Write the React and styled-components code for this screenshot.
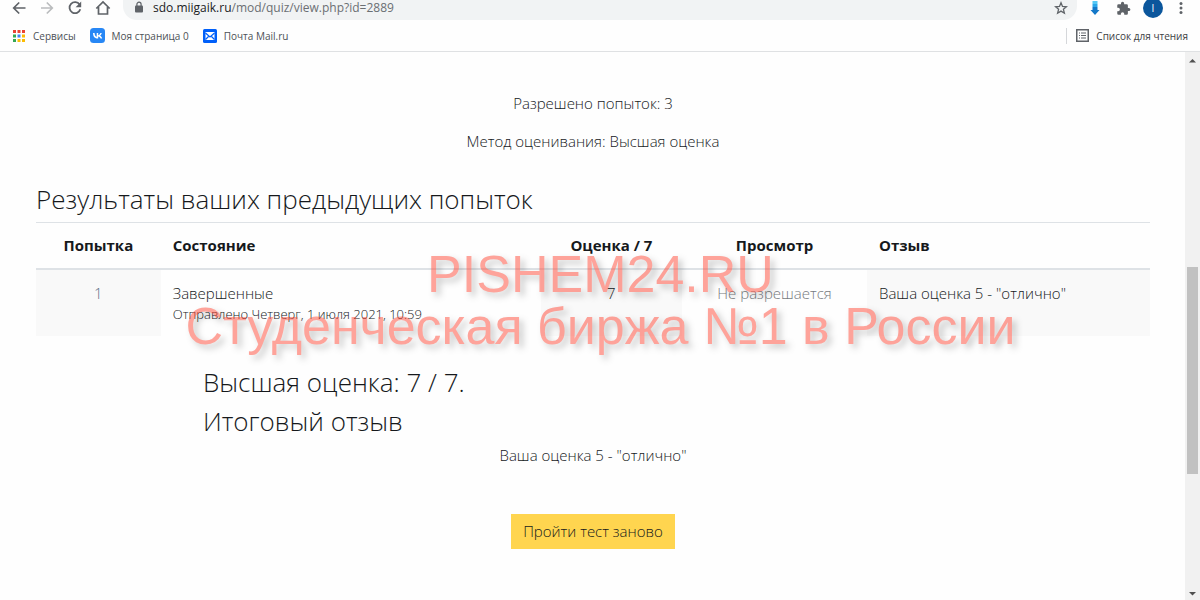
import React from 'react';
import styled, { createGlobalStyle } from 'styled-components';

const GlobalStyle = createGlobalStyle`
  * {
    box-sizing: border-box;
  }
  body {
    margin: 0;
    background-color: #fefefe;
    color: #16191c;
    font-family: 'Open Sans', 'Noto Sans', sans-serif;
    font-size: 15px;
    font-weight: 300;
    line-height: 22px;
  }
`;

const Screen = styled.div`
  min-height: 100vh;
  display: flex;
  flex-direction: column;
`;

const Toolbar = styled.header`
  height: 20px;
  display: flex;
  align-items: flex-start;
  padding: 0 11px;
  overflow: hidden;
`;

const IconButton = styled.button`
  width: 16px;
  height: 16px;
  padding: 0;
  margin-right: 12px;
  flex: none;
  display: flex;
  justify-content: center;
  align-items: center;
  color: ${(props) => (props.$muted ? '#babcbe' : '#5f6368')};
  background-color: transparent;
  border: none;
`;

const AddressBar = styled.div`
  flex: 1;
  height: 20px;
  display: flex;
  padding: 0 8px 4px 11px;
  margin-right: 10px;
  background-color: #f1f3f4;
  border-radius: 0 0 14px 14px;
  color: #6b6f73;
  font-size: 12px;
  font-weight: 400;
  line-height: 16px;

  svg {
    flex: none;
  }
`;

const Url = styled.span`
  flex: 1;
  margin-left: 9px;

  b {
    color: #202124;
    font-weight: 400;
  }
`;

const StarButton = styled(IconButton)`
  margin: 0;
`;

const Avatar = styled.button`
  width: 20px;
  height: 20px;
  padding: 0;
  margin-top: -2px;
  margin-right: 10px;
  flex: none;
  color: white;
  background-color: #0b569c;
  border: none;
  border-radius: 50%;
  font-family: inherit;
  font-size: 10px;
  line-height: 20px;
`;

const Bookmarks = styled.nav`
  height: 32px;
  display: flex;
  align-items: center;
  padding: 0 12px;
  border-bottom: 1px solid #dfe1e3;
`;

const Bookmark = styled.a`
  display: flex;
  align-items: center;
  gap: 7px;
  margin-right: 14px;
  color: #4d5156;
  font-size: 10px;
  font-weight: 400;
  line-height: 16px;
  text-decoration: none;
  white-space: nowrap;
`;

const ReadingList = styled.button`
  display: flex;
  align-items: center;
  gap: 7px;
  margin-left: auto;
  padding: 0 0 0 9px;
  color: #3c4043;
  background-color: transparent;
  border: none;
  border-left: 1px solid #d5d7da;
  font-family: inherit;
  font-size: 10px;
  line-height: 16px;
  white-space: nowrap;
`;

const Viewport = styled.div`
  flex: 1;
  display: flex;
`;

const Main = styled.main`
  flex: 1;
  position: relative;
  padding: 40px 35px 32px 36px;
`;

const Info = styled.p`
  margin: 0 0 16px;
  text-align: center;
`;

const Title = styled.h3`
  margin: 0;
  font-size: 26px;
  font-weight: 300;
  line-height: 31px;
`;

const ResultsTitle = styled(Title)`
  margin-top: 32px;
  margin-bottom: 7px;
`;

const Table = styled.table`
  width: 100%;
  table-layout: fixed;
  border-collapse: collapse;
`;

const HeadCell = styled.th`
  width: ${(props) => props.$width};
  padding: 11px 12px 12px;
  text-align: ${(props) => props.$align || 'left'};
  font-weight: 700;
  border-top: 1px solid #dee2e6;
  border-bottom: 2px solid #dee2e6;
`;

const Cell = styled.td`
  height: 66px;
  padding: 12px;
  vertical-align: top;
  text-align: ${(props) => props.$align || 'left'};
  color: ${(props) => props.$color || 'inherit'};
  background-color: ${(props) => (props.$shaded ? '#f9f9f9' : 'transparent')};
`;

const StateDetails = styled.span`
  display: block;
  font-size: 13px;
  line-height: 20px;
`;

const Feedback = styled.section`
  padding: 31px 0 7px 167px;
  display: flex;
  flex-direction: column;
  gap: 8px;
`;

const Actions = styled.div`
  display: flex;
  justify-content: center;
  padding-top: 32px;
`;

const RetryButton = styled.button`
  padding: 6px 12px 7px;
  color: #16191c;
  background-color: #ffd54f;
  border: none;
  font-family: inherit;
  font-size: 15px;
  font-weight: 300;
  line-height: 22px;
`;

const Watermark = styled.div`
  position: absolute;
  top: 196px;
  left: 0;
  right: 0;
  padding-left: 16px;
  color: #ff4a38;
  opacity: 0.5;
  font-family: 'Liberation Sans', Arial, sans-serif;
  font-size: 52px;
  font-weight: 400;
  line-height: 52px;
  text-align: center;
  text-shadow: 4px 4px 6px rgba(0, 0, 0, 0.4);
  white-space: nowrap;
  pointer-events: none;
`;

const Scrollbar = styled.div`
  width: 15px;
  display: flex;
  flex-direction: column;
  align-items: center;
  background-color: #f1f1f1;
`;

const ScrollArrow = styled.svg`
  width: 15px;
  height: 17px;
  flex: none;
  fill: #505050;
`;

const ScrollTrack = styled.div`
  flex: 1;
  width: 11px;
  display: flex;
  flex-direction: column;
`;

const ScrollThumb = styled.div`
  flex: 207;
  background-color: #c1c1c1;
`;

const ScrollSpace = styled.div`
  flex: ${(props) => props.$size};
`;

const AppsIcon = () => {
  const colors = ['#ea4335', '#ea4335', '#ea4335', '#34a853', '#4285f4', '#fbbc04', '#34a853', '#fbbc04', '#fbbc04'];
  return (
    <svg width='14' height='14' viewBox='0 0 14 14'>
      {colors.map((color, i) => (
        <rect key={i} x={1 + (i % 3) * 4.5} y={1 + Math.floor(i / 3) * 4.5} width='3' height='3' fill={color} />
      ))}
    </svg>
  );
};

const VkIcon = () => (
  <svg width='15' height='15' viewBox='0 0 15 15'>
    <rect width='15' height='15' rx='3.5' fill='#2787f5' />
    <path
      fill='white'
      d='M8 10.6C4.9 10.6 3.1 8.5 3 4.9h1.6c.1 2.6 1.2 3.7 2.1 3.9V4.9h1.5v2.3c.9-.1 1.8-1.1 2.2-2.3h1.4c-.2 1.2-1.2 2.3-1.9 2.7.7.3 1.8 1.2 2.3 3h-1.6c-.4-1.1-1.2-1.9-2.4-2v2z'
    />
  </svg>
);

const MailIcon = () => (
  <svg width='14' height='14' viewBox='0 0 14 14'>
    <rect width='14' height='14' rx='1.5' fill='#005ff9' />
    <rect x='2.5' y='3' width='9' height='8' fill='white' />
    <path d='M2.5 4l4.5 4 4.5-4M2.5 10.5l3-3M11.5 10.5l-3-3' fill='none' stroke='#005ff9' strokeWidth='1.2' />
  </svg>
);

const ListIcon = () => (
  <svg width='13' height='13' viewBox='0 0 13 13' fill='none' stroke='#5f6368'>
    <rect x='.75' y='.75' width='11.5' height='11.5' strokeWidth='1.5' />
    <path d='M3 4h1M5 4h5M3 6.5h1M5 6.5h5M3 9h1M5 9h5' strokeWidth='1.2' />
  </svg>
);

const columns = [
  { title: 'Попытка', width: '11.2%', align: 'center' },
  { title: 'Состояние', width: '34.1%' },
  { title: 'Оценка / 7', width: '12.7%', align: 'center' },
  { title: 'Просмотр', width: '16.6%', align: 'center' },
  { title: 'Отзыв', width: '25.4%' },
];

export default function App() {
  return (
    <Screen>
      <GlobalStyle />
      <Toolbar>
        <IconButton aria-label='Назад'>
          <svg width='16' height='16' viewBox='0 0 16 16' fill='none' stroke='currentColor' strokeWidth='1.7'>
            <path d='M14.5 8H3M8.2 2.5L2.7 8l5.5 5.5' />
          </svg>
        </IconButton>
        <IconButton aria-label='Вперед' $muted>
          <svg width='16' height='16' viewBox='0 0 16 16' fill='none' stroke='currentColor' strokeWidth='1.7'>
            <path d='M2 8h11M7.8 2.5L13.3 8l-5.5 5.5' />
          </svg>
        </IconButton>
        <IconButton aria-label='Обновить'>
          <svg width='16' height='16' viewBox='0 0 16 16'>
            <path d='M12.6 4.6A5.5 5.5 0 1 0 13.3 9.3' fill='none' stroke='currentColor' strokeWidth='1.8' />
            <path d='M14.2 1.6v5.6H8.6z' fill='currentColor' />
          </svg>
        </IconButton>
        <IconButton aria-label='Главная страница'>
          <svg width='16' height='16' viewBox='0 0 16 16' fill='none' stroke='currentColor' strokeWidth='1.7'>
            <path d='M1.3 8.5L8 2l6.7 6.5M3.5 7v7h9V7' />
          </svg>
        </IconButton>
        <AddressBar>
          <svg width='10' height='15' viewBox='0 0 10 15'>
            <rect x='1' y='5.5' width='8' height='7' rx='1' fill='#5f6368' />
            <path d='M2.9 6V4.3a2.1 2.1 0 0 1 4.2 0V6' fill='none' stroke='#5f6368' strokeWidth='1.2' />
          </svg>
          <Url>
            <b>sdo.miigaik.ru</b>/mod/quiz/view.php?id=2889
          </Url>
          <StarButton aria-label='Добавить в закладки'>
            <svg width='14' height='14' viewBox='0 0 14 14' fill='none' stroke='currentColor' strokeWidth='1.3'>
              <path d='M7 1.8l1.5 3.7 3.9.3-3 2.5 1 3.9L7 10.1l-3.4 2.1 1-3.9-3-2.5 3.9-.3z' />
            </svg>
          </StarButton>
        </AddressBar>
        <IconButton aria-label='Загрузки'>
          <svg width='10' height='16' viewBox='0 0 10 16'>
            <path d='M2.5 1h5v3h-5z' fill='#55c8f5' />
            <path d='M2.5 4h5v3h-5z' fill='#2ba7ea' />
            <path d='M2.5 7h5v3H9.5L5 15 .5 10h2z' fill='#1478c8' />
          </svg>
        </IconButton>
        <IconButton aria-label='Расширения'>
          <svg width='15' height='15' viewBox='0 0 24 24' fill='currentColor'>
            <path d='M20.5 11H19V7a2 2 0 0 0-2-2h-4V3.5a2.5 2.5 0 0 0-5 0V5H4a2 2 0 0 0-2 2v3.8h1.5a2.7 2.7 0 0 1 0 5.4H2V20a2 2 0 0 0 2 2h3.8v-1.5a2.7 2.7 0 0 1 5.4 0V22H17a2 2 0 0 0 2-2v-4h1.5a2.5 2.5 0 0 0 0-5z' />
          </svg>
        </IconButton>
        <Avatar>I</Avatar>
        <StarButton aria-label='Меню'>
          <svg width='16' height='16' viewBox='0 0 16 16' fill='currentColor'>
            <circle cx='8' cy='3.5' r='1.5' />
            <circle cx='8' cy='8' r='1.5' />
            <circle cx='8' cy='12.5' r='1.5' />
          </svg>
        </StarButton>
      </Toolbar>
      <Bookmarks>
        <Bookmark href='#apps'>
          <AppsIcon />
          Сервисы
        </Bookmark>
        <Bookmark href='#vk'>
          <VkIcon />
          Моя страница 0
        </Bookmark>
        <Bookmark href='#mail'>
          <MailIcon />
          Почта Mail.ru
        </Bookmark>
        <ReadingList>
          <ListIcon />
          Список для чтения
        </ReadingList>
      </Bookmarks>
      <Viewport>
        <Main>
          <Info>Разрешено попыток: 3</Info>
          <Info>Метод оценивания: Высшая оценка</Info>
          <ResultsTitle>Результаты ваших предыдущих попыток</ResultsTitle>
          <Table>
            <thead>
              <tr>
                {columns.map((col) => (
                  <HeadCell key={col.title} $width={col.width} $align={col.align}>
                    {col.title}
                  </HeadCell>
                ))}
              </tr>
            </thead>
            <tbody>
              <tr>
                <Cell $align='center' $color='#5c6f88' $shaded>
                  1
                </Cell>
                <Cell>
                  Завершенные
                  <StateDetails>Отправлено Четверг, 1 июля 2021, 10:59</StateDetails>
                </Cell>
                <Cell $align='center' $shaded>
                  7
                </Cell>
                <Cell $align='center' $color='#777b7f'>
                  Не разрешается
                </Cell>
                <Cell $shaded>Ваша оценка 5 - "отлично"</Cell>
              </tr>
            </tbody>
          </Table>
          <Feedback>
            <Title>Высшая оценка: 7 / 7.</Title>
            <Title>Итоговый отзыв</Title>
          </Feedback>
          <Info>Ваша оценка 5 - "отлично"</Info>
          <Actions>
            <RetryButton>Пройти тест заново</RetryButton>
          </Actions>
          <Watermark>
            PISHEM24.RU
            <br />
            Студенческая биржа №1 в России
          </Watermark>
        </Main>
        <Scrollbar>
          <ScrollArrow viewBox='0 0 15 17'>
            <path d='M4 10.5h7L7.5 7z' />
          </ScrollArrow>
          <ScrollTrack>
            <ScrollSpace $size={198} />
            <ScrollThumb />
            <ScrollSpace $size={109} />
          </ScrollTrack>
          <ScrollArrow viewBox='0 0 15 17'>
            <path d='M4 9h7l-3.5 3.5z' />
          </ScrollArrow>
        </Scrollbar>
      </Viewport>
    </Screen>
  );
}
